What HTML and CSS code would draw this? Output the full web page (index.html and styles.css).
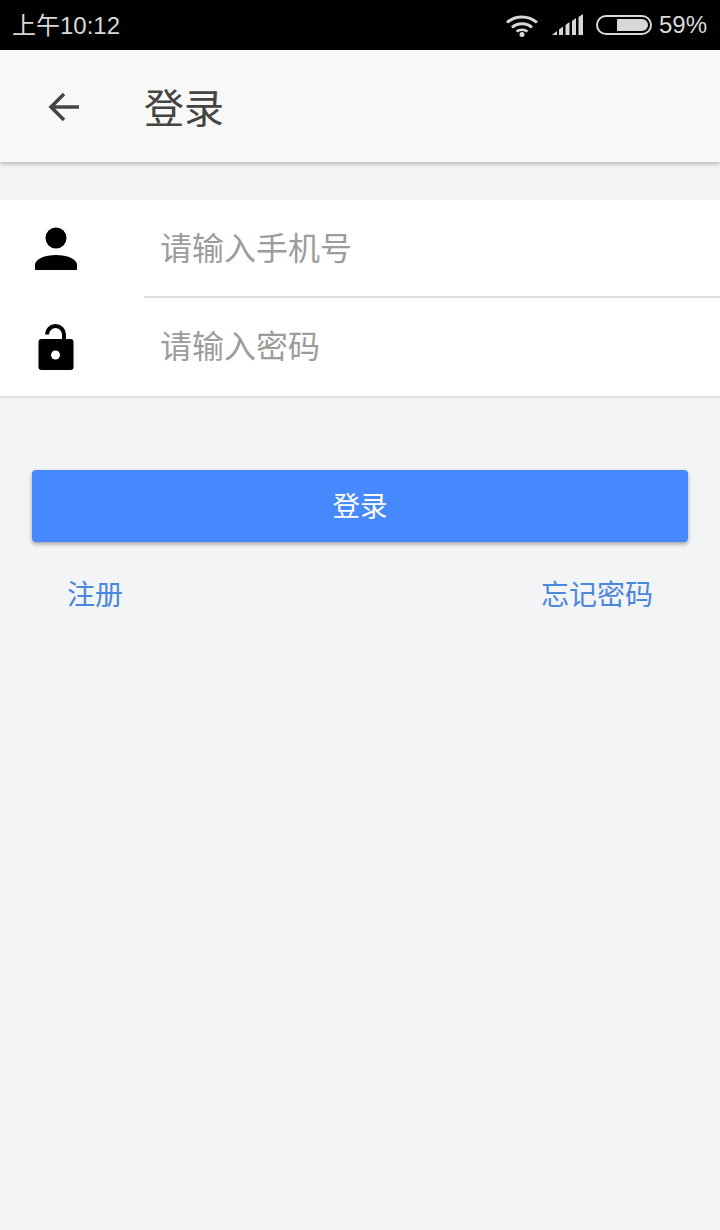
FILE: index.html
```html
<!DOCTYPE html>
<html lang="zh-CN">
<head>
<meta charset="utf-8">
<title>登录</title>
<link rel="stylesheet" href="styles.css">
</head>
<body>
<div class="status">
  <span class="time">上午10:12</span>
  <div class="status-right">
    <svg class="wifi" width="34" height="24" viewBox="0 0 34 24"><path d="M2 9.500C10.500 2 23.500 2 32 9.500" fill="none" stroke="#d8d8d8" stroke-width="3"/><path d="M7 14.500C12.500 9.500 21.500 9.500 27 14.500" fill="none" stroke="#d8d8d8" stroke-width="3"/><path d="M11.500 18.500C14.500 16 19.500 16 22.500 18.500" fill="none" stroke="#d8d8d8" stroke-width="2.500"/><circle cx="17" cy="21.500" r="2.500" fill="#d8d8d8"/></svg>
    <svg class="signal" width="32" height="22" viewBox="0 0 32 22"><path d="M0 21 5 17V21ZM7 15.500 11 12.500V21H7ZM13.500 11 17.500 8V21H13.500ZM20 7 24 4V21H20ZM26.500 3 31 0V21H26.500Z" fill="#d8d8d8"/></svg>
    <div class="battery"><div class="battery-fill"></div></div>
    <span class="percent">59%</span>
  </div>
</div>
<header class="appbar">
  <svg class="back" width="36" height="36" viewBox="0 0 36 36"><path d="M33 18H5M18 5 5 18 18 31" fill="none" stroke="#444" stroke-width="3.500"/></svg>
  <h1 class="title">登录</h1>
</header>
<form class="fields">
  <div class="field">
    <div class="icon-cell"><svg width="44" height="44" viewBox="0 0 44 44"><circle cx="22" cy="11" r="10.500" fill="#000"/><path d="M1 43V38C1 32 11 28 22 28S43 32 43 38V43Z" fill="#000"/></svg></div>
    <div class="input-cell line"><span class="placeholder">请输入手机号</span></div>
  </div>
  <div class="field">
    <div class="icon-cell"><svg width="36" height="46" viewBox="0 0 36 46"><path d="M9 10.500A8.500 8.500 0 0 1 26 10.500V16" fill="none" stroke="#000" stroke-width="4"/><rect x="0.500" y="15" width="35" height="31" rx="3" fill="#000"/><circle cx="17.500" cy="31" r="4.500" fill="#fff"/></svg></div>
    <div class="input-cell"><span class="placeholder">请输入密码</span></div>
  </div>
</form>
<button class="login" type="button">登录</button>
<div class="links">
  <a class="link">注册</a>
  <a class="link">忘记密码</a>
</div>
</body>
</html>
```
FILE: styles.css
```css
* { box-sizing: border-box; }
html, body { margin: 0; padding: 0; }
body {
  width: 720px;
  height: 1230px;
  overflow: hidden;
  background: #f3f4f6;
  font-family: "Roboto", "Noto Sans CJK SC", sans-serif;
}
.status {
  height: 50px;
  background: #000;
  color: #d8d8d8;
  display: flex;
  align-items: center;
  justify-content: space-between;
  padding: 0 13px 0 12px;
  font-family: "Liberation Sans", "Noto Sans CJK SC", sans-serif;
}
.time { font-size: 24px; margin-top: -4px; }
.status-right { display: flex; align-items: center; }
.wifi { margin-right: 13px; }
.signal { margin-right: 12px; }
.battery {
  width: 56px;
  height: 20px;
  border: 2px solid #d8d8d8;
  border-radius: 10px;
  padding: 2px;
  display: flex;
  justify-content: flex-end;
  margin-right: 7px;
}
.battery-fill { width: 31px; background: #d8d8d8; border-radius: 1px 7px 7px 1px; }
.percent { font-size: 24px; }
.appbar {
  height: 112px;
  background: #f8f8f8;
  display: flex;
  align-items: center;
  padding-left: 46px;
  box-shadow: 0 2px 4px rgba(0,0,0,.25);
  position: relative;
}
.back { margin-right: 63px; margin-top: 2px; }
.title { margin: 0 0 -4px; font-size: 40px; font-weight: 400; color: #444; line-height: 1; position: relative; left: -1px; top: 2px; }
.fields {
  margin-top: 38px;
  background: #fff;
  border-bottom: 2px solid #dedede;
  height: 198px;
}
.field { display: flex; height: 98px; }
.icon-cell { width: 144px; flex: none; display: flex; justify-content: center; padding-right: 32px; align-items: center; }
.input-cell { flex: 1; display: flex; align-items: center; padding-left: 16px; }
.line { box-shadow: inset 0 -2px #dedede; }
.placeholder { font-size: 32px; color: #9c9c9c; line-height: 44px; }
.login {
  display: block;
  width: 656px;
  height: 72px;
  margin: 72px 32px 0;
  border: 0;
  border-radius: 4px;
  background: #4688fd;
  color: #fff;
  font: 400 27.500px/1 "Roboto", "Noto Sans CJK SC", sans-serif;
  padding: 2px 0 0;
  box-shadow: 0 2px 4px rgba(0,0,0,.35);
}
.links { display: flex; justify-content: space-between; padding: 34px 67px 0; }
.link { font-size: 28px; color: #4a88dc; line-height: 40px; }
```
